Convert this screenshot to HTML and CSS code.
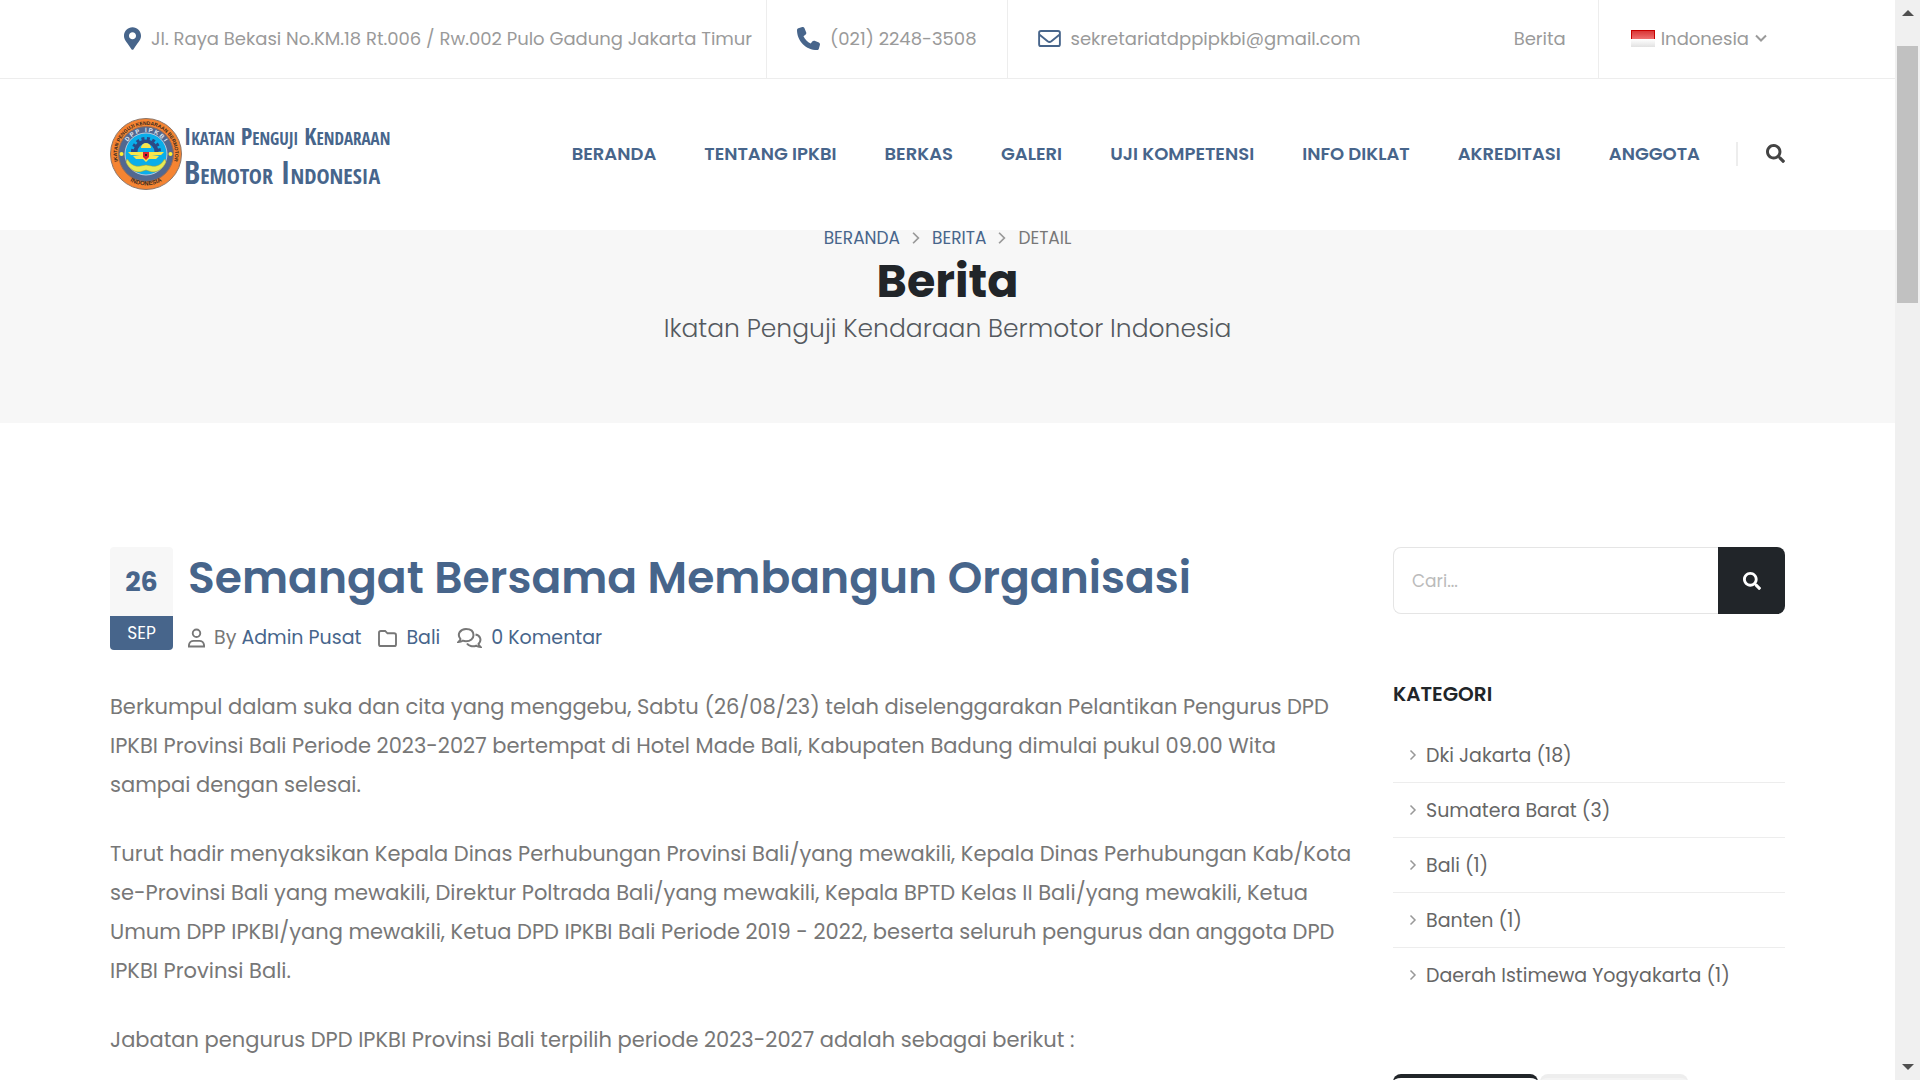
FILE: index.html
```html
<!DOCTYPE html>
<html lang="id">
<head>
<meta charset="utf-8">
<meta name="viewport" content="width=device-width, initial-scale=1">
<title>Berita</title>
<link rel="stylesheet" href="styles.css">
</head>
<body>
<svg class="sprite" aria-hidden="true">
  <symbol id="i-search" viewBox="0 0 512 512"><path d="M505 442.700 405.300 343c-4.500-4.500-10.600-7-17-7H372c27.600-35.300 44-79.700 44-128C416 93.100 322.900 0 208 0S0 93.100 0 208s93.100 208 208 208c48.300 0 92.700-16.400 128-44v16.300c0 6.400 2.500 12.500 7 17l99.700 99.700c9.400 9.400 24.600 9.400 33.900 0l28.300-28.300c9.400-9.400 9.400-24.600.1-34zM208 336c-70.700 0-128-57.200-128-128 0-70.700 57.200-128 128-128 70.700 0 128 57.200 128 128 0 70.700-57.200 128-128 128z"/></symbol>
  <symbol id="i-right" viewBox="0 0 8 12"><path d="M1.500 1.500 6 6l-4.500 4.500" fill="none" stroke="currentColor" stroke-width="1.500"/></symbol>
</svg>

<div class="page">
  <header>
    <div class="topbar">
      <div class="info info-first">
        <svg class="pin" viewBox="0 0 384 512" aria-hidden="true"><path d="M172.300 501.700C27 291 0 269.400 0 192 0 86 86 0 192 0s192 86 192 192c0 77.400-27 99-172.300 309.700-9.500 13.800-29.900 13.800-39.400 0zM192 272c44.200 0 80-35.800 80-80s-35.800-80-80-80-80 35.800-80 80 35.800 80 80 80z"/></svg>
        <span>Jl. Raya Bekasi No.KM.18 Rt.006 / Rw.002 Pulo Gadung Jakarta Timur</span>
      </div>
      <div class="info">
        <svg class="phone" viewBox="0 0 512 512" aria-hidden="true"><path d="M164.900 24.600c-7.700-18.600-28-28.500-47.400-23.200l-88 24C12.100 30.200 0 46 0 64c0 247.400 200.600 448 448 448 18 0 33.800-12.100 38.600-29.500l24-88c5.300-19.400-4.600-39.700-23.200-47.400l-96-40c-16.300-6.800-35.200-2.100-46.300 11.600L304.700 368C234.300 334.700 177.300 277.700 144 207.300L193.300 167c13.700-11.200 18.400-30 11.600-46.300l-40-96z"/></svg>
        <a href="#telepon">(021) 2248-3508</a>
      </div>
      <div class="info">
        <svg class="mail" viewBox="0 0 24 18" aria-hidden="true"><rect x="1" y="1" width="22" height="16" rx="2"/><path d="m1.500 5 8.500 7q2 1.500 4 0l8.500-7"/></svg>
        <a href="#surel">sekretariatdppipkbi@gmail.com</a>
      </div>
      <a class="info info-news" href="#berita">Berita</a>
      <button class="info language" type="button">
        <svg class="flag" viewBox="0 0 24 17" aria-hidden="true">
          <defs><linearGradient id="flag-red" x2="0" y2="1"><stop stop-color="#d93535"/><stop offset="1" stop-color="#ef7070"/></linearGradient><linearGradient id="flag-white" x2="0" y2="1"><stop stop-color="#fff"/><stop offset="1" stop-color="#e2e2e2"/></linearGradient></defs>
          <path fill="#c80000" d="M0 0h24v9H0z"/><path fill="url(#flag-red)" d="M1 1h22v8H1z"/><path fill="url(#flag-white)" d="M0 9h24v8H0z"/>
        </svg>
        <span>Indonesia</span>
        <svg class="down" viewBox="0 0 12 8" aria-hidden="true"><path d="m1 1.500 5 5 5-5"/></svg>
      </button>
    </div>

    <div class="navbar">
      <a class="brand" href="#beranda">
        <svg class="emblem" viewBox="0 0 72 72" aria-hidden="true">
          <defs><path id="arc-outer" d="M8.500 45A29 29 0 1 1 63.500 45"/><path id="arc-inner" d="M14 36A22 22 0 0 1 58 36"/><path id="arc-bottom" d="M15 59.500A32 32 0 0 0 57 59.500"/></defs>
          <circle cx="36" cy="36" r="35.500" fill="#f58432" stroke="#8b7568"/>
          <circle cx="36" cy="36" r="27.500" fill="#526890" stroke="#a26d4e"/>
          <circle cx="36" cy="36" r="21" fill="#0aaeea" stroke="#b9c9dc"/>
          <g fill="none" stroke="#2b4a86"><path stroke-width="4" d="M25.500 34a10.500 10.500 0 0 1 21 0"/><path stroke-width="3" stroke-dasharray="3 2.500" d="M22.500 34a13.500 13.500 0 0 1 27 0"/></g>
          <path fill="#f9e54b" d="M31 30a5 5 0 0 1 10 0zM18 34h15l3 2 3-2h15l-3 3H42l7 1-3 3h-7l-3 3-3-3h-7l-3-3 7-1H21z"/>
          <path fill="#e7eb55" stroke="#ae9b27" stroke-width=".5" d="M17.500 41c3 6 8 8 13 7l5.500-1 5.500 1c5 1 10-1 13-7l1.500 3c-3 7-10 12-17 9l-3-1-3 1c-7 3-14-2-17-9z"/>
          <path fill="#d7232f" d="M33 34h6v5l-3 3-3-3z"/><path fill="#222" d="M35 36h2v2h-2z"/>
          <circle cx="11.500" cy="36" r="2" fill="#fff133"/><circle cx="60.500" cy="36" r="2" fill="#fff133"/>
          <text class="ring ring-outer" text-anchor="middle"><textPath href="#arc-outer" startOffset="50%">IKATAN PENGUJI KENDARAAN BERMOTOR</textPath></text>
          <text class="ring ring-inner" text-anchor="middle"><textPath href="#arc-inner" startOffset="50%">D P P &#160; I P K B I</textPath></text>
          <text class="ring ring-bottom" text-anchor="middle"><textPath href="#arc-bottom" startOffset="50%">INDONESIA</textPath></text>
        </svg>
        <span class="brand-name"><span class="brand-top">Ikatan Penguji Kendaraan</span><span class="brand-bottom">Bemotor Indonesia</span></span>
      </a>
      <nav class="menu">
        <a href="#beranda">BERANDA</a>
        <a href="#tentang">TENTANG IPKBI</a>
        <a href="#berkas">BERKAS</a>
        <a href="#galeri">GALERI</a>
        <a href="#uji">UJI KOMPETENSI</a>
        <a href="#diklat">INFO DIKLAT</a>
        <a href="#akreditasi">AKREDITASI</a>
        <a href="#anggota">ANGGOTA</a>
      </nav>
      <button class="nav-search" type="button" aria-label="Cari"><svg viewBox="0 0 512 512"><use href="#i-search"/></svg></button>
    </div>
  </header>

  <section class="page-header">
    <nav class="crumbs">
      <a href="#beranda">BERANDA</a>
      <svg><use href="#i-right"/></svg>
      <a href="#berita">BERITA</a>
      <svg><use href="#i-right"/></svg>
      <span>DETAIL</span>
    </nav>
    <h1>Berita</h1>
    <p>Ikatan Penguji Kendaraan Bermotor Indonesia</p>
  </section>

  <div class="content">
    <article>
      <div class="post-head">
        <div class="date"><span class="day">26</span><span class="month">SEP</span></div>
        <div>
          <h2><a href="#artikel">Semangat Bersama Membangun Organisasi</a></h2>
          <div class="meta">
            <span><svg class="user" viewBox="0 0 18 20" aria-hidden="true"><circle cx="9" cy="5" r="4"/><path d="M1 19v-1.500A5 5 0 0 1 6 13h6a5 5 0 0 1 5 4.500V19z"/></svg><span>By <a href="#admin">Admin Pusat</a></span></span>
            <span><svg class="folder" viewBox="0 0 20 18" aria-hidden="true"><path d="M1 15V3a2 2 0 0 1 2-2h4.500L10 3.500h7a2 2 0 0 1 2 2V15a2 2 0 0 1-2 2H3a2 2 0 0 1-2-2z"/></svg><a href="#bali">Bali</a></span>
            <span><svg class="chat" viewBox="0 0 24 20" aria-hidden="true"><path d="M1 14q2-2 2-3C-1 6 3 1 8.500 1S16 4 16 7.200s-3 6-7.500 6q-2 0-3.200-.5Q3.500 14 1 14z"/><path d="M18 6.500c5 1 6.500 6 3 9.500q0 1 2 3-2.500 0-4.300-1.300C15 19 11 18 9.500 15.500"/></svg><a href="#komentar">0 Komentar</a></span>
          </div>
        </div>
      </div>
      <p>Berkumpul dalam suka dan cita yang menggebu, Sabtu (26/08/23) telah diselenggarakan Pelantikan Pengurus DPD IPKBI Provinsi Bali Periode 2023-2027 bertempat di Hotel Made Bali, Kabupaten Badung dimulai pukul 09.00 Wita sampai dengan selesai.</p>
      <p>Turut hadir menyaksikan Kepala Dinas Perhubungan Provinsi Bali/yang mewakili, Kepala Dinas Perhubungan Kab/Kota se-Provinsi Bali yang mewakili, Direktur Poltrada Bali/yang mewakili, Kepala BPTD Kelas II Bali/yang mewakili, Ketua Umum DPP IPKBI/yang mewakili, Ketua DPD IPKBI Bali Periode 2019 - 2022, beserta seluruh pengurus dan anggota DPD IPKBI Provinsi Bali.</p>
      <p>Jabatan pengurus DPD IPKBI Provinsi Bali terpilih periode 2023-2027 adalah sebagai berikut :</p>
    </article>

    <aside>
      <form class="search">
        <input type="text" placeholder="Cari..." aria-label="Cari">
        <button type="submit" aria-label="Cari"><svg viewBox="0 0 512 512"><use href="#i-search"/></svg></button>
      </form>
      <h3>KATEGORI</h3>
      <ul class="categories">
        <li><a href="#dki"><svg><use href="#i-right"/></svg>Dki Jakarta (18)</a></li>
        <li><a href="#sumbar"><svg><use href="#i-right"/></svg>Sumatera Barat (3)</a></li>
        <li><a href="#kat-bali"><svg><use href="#i-right"/></svg>Bali (1)</a></li>
        <li><a href="#banten"><svg><use href="#i-right"/></svg>Banten (1)</a></li>
        <li><a href="#diy"><svg><use href="#i-right"/></svg>Daerah Istimewa Yogyakarta (1)</a></li>
      </ul>
      <div class="tabs"><div class="tab tab-active"></div><div class="tab"></div></div>
    </aside>
  </div>
</div>

<div class="scrollbar" aria-hidden="true">
  <svg viewBox="0 0 12 6"><path d="M6 0l6 6H0z"/></svg>
  <div class="track"><div class="thumb"></div></div>
  <svg viewBox="0 0 12 6"><path d="M0 0h12L6 6z"/></svg>
</div>
</body>
</html>
```
FILE: styles.css
```css
:root {
  --blue: #47658b;
  --dark: #212529;
  --text: #777;
  --muted: #9a9a9a;
  --line: #ededed;
  --gutter: 110px;
}

* { box-sizing: border-box; }

body {
  margin: 0;
  display: flex;
  height: 100vh;
  overflow: hidden;
  background: #fff;
  color: var(--text);
  font-family: Poppins, Inter, "Open Sans", sans-serif;
}

h1, h2, h3, p, ul { margin: 0; padding: 0; }
a { color: inherit; text-decoration: none; }
button { border: 0; background: none; padding: 0; font: inherit; color: inherit; cursor: pointer; }
svg { display: block; flex: none; fill: currentColor; }
.sprite { position: absolute; width: 0; height: 0; }

.page { flex: 1; min-width: 0; overflow: hidden; }

/* Contact bar */
.topbar {
  display: flex;
  height: 79px;
  padding: 0 var(--gutter);
  border-bottom: 1px solid var(--line);
  color: var(--muted);
  font-size: 18px;
  white-space: nowrap;
}
.info {
  display: flex;
  align-items: center;
  gap: 10px;
  padding: 0 30px 2px;
}
.info + .info { border-left: 1px solid var(--line); }
.info.info-first { padding: 0 14px 2px; }
.info.info-news { margin-left: auto; padding-right: 32px; border-left: 0; }
.info.language { gap: 6px; padding-left: 32px; padding-right: 18px; }
.pin { width: 17px; height: 23px; color: var(--blue); }
.phone { width: 23px; height: 23px; color: var(--blue); }
.mail { width: 23px; height: 17px; fill: none; stroke: var(--blue); stroke-width: 2; }
.flag { width: 24px; height: 17px; }
.down { width: 12px; height: 8px; fill: none; stroke: currentColor; stroke-width: 2; }

/* Main navigation */
.navbar {
  display: flex;
  align-items: center;
  height: 151px;
  padding: 0 var(--gutter) 2px;
}
.brand { display: flex; align-items: center; gap: 2px; color: var(--blue); }
.emblem { width: 72px; height: 72px; }
.ring { font-family: "Liberation Sans", sans-serif; font-weight: 700; }
.ring-outer { font-size: 5px; fill: #38291f; }
.ring-inner { font-size: 6px; fill: #e3e8f0; }
.ring-bottom { font-size: 6px; fill: #38291f; }
.brand-name {
  display: flex;
  flex-direction: column;
  font-family: "Open Sans Condensed", "Open Sans", sans-serif;
  font-variant: small-caps;
  font-weight: 600;
  line-height: 36px;
  white-space: nowrap;
}
.brand-top { font-size: 24px; }
.brand-bottom { font-size: 32px; }
.menu {
  display: flex;
  gap: 48px;
  margin-left: auto;
  color: var(--blue);
  font-size: 18px;
  font-weight: 600;
  white-space: nowrap;
}
.nav-search {
  margin-left: 36px;
  padding-left: 28px;
  border-left: 2px solid var(--line);
  height: 24px;
  color: #444;
}
.nav-search svg { width: 19px; height: 19px; }

/* Page title */
.page-header {
  display: flex;
  flex-direction: column;
  align-items: center;
  padding-bottom: 76px;
  background: #f7f7f7;
  text-align: center;
}
.crumbs { display: flex; align-items: center; gap: 11px; font-size: 17px; line-height: 16px; }
.crumbs a { color: var(--blue); }
.crumbs svg { width: 10px; height: 14px; color: #999; }
.page-header h1 { margin-top: 10px; color: var(--dark); font-size: 46px; font-weight: 700; line-height: 50px; }
.page-header p { margin-top: 5px; color: #555a5f; font-size: 25px; font-weight: 300; line-height: 36px; }

/* Article */
.content {
  display: grid;
  grid-template-columns: minmax(0, 1fr) 392px;
  gap: 40px;
  padding: 124px var(--gutter) 0;
}
.post-head { display: flex; gap: 15px; margin-bottom: 35px; }
.date { width: 63px; text-align: center; border-radius: 4px; overflow: hidden; align-self: flex-start; }
.day, .month { display: block; }
.day { background: #f7f7f7; color: var(--blue); font-size: 27px; font-weight: 700; line-height: 69px; }
.month { background: var(--blue); color: #fff; font-size: 17px; line-height: 34px; }
.post-head h2 { padding-top: 6px; color: var(--blue); font-size: 44px; font-weight: 600; line-height: 50px; white-space: nowrap; }
.meta { display: flex; gap: 17px; margin-top: 21px; font-size: 19px; line-height: 28px; }
.meta > span { display: flex; align-items: center; gap: 9px; }
.meta a { color: var(--blue); }
.meta svg { fill: none; stroke: currentColor; stroke-width: 2; }
.user { width: 17px; height: 20px; }
.folder { width: 19px; height: 17px; }
.chat { width: 25px; height: 20px; }
article p { margin-bottom: 30px; font-size: 21px; line-height: 39px; }

/* Sidebar */
.search { display: flex; height: 67px; margin-bottom: 66px; }
.search input {
  flex: 1;
  min-width: 0;
  padding: 0 18px;
  border: 1px solid #e5e5e5;
  border-right: 0;
  border-radius: 8px 0 0 8px;
  font: inherit;
  font-size: 17px;
}
.search input::placeholder { color: #bbb; }
.search button {
  display: grid;
  place-items: center;
  width: 67px;
  border-radius: 0 8px 8px 0;
  background: var(--dark);
  color: #fff;
}
.search button svg { width: 18px; height: 18px; }
aside h3 { margin-bottom: 20px; color: var(--dark); font-size: 20px; font-weight: 600; line-height: 28px; }
.categories { list-style: none; margin-bottom: 72px; }
.categories li + li { border-top: 1px solid var(--line); }
.categories a { display: flex; align-items: center; gap: 9px; height: 54px; padding-left: 16px; color: #666; font-size: 19px; }
.categories svg { width: 8px; height: 12px; color: #999; }
.tabs { display: flex; gap: 2px; }
.tab { width: 148px; height: 60px; border-top: 4px solid #eee; border-radius: 8px 8px 0 0; background: #f4f4f4; }
.tab-active { width: 145px; border-top-color: var(--dark); background: #fff; }

/* Window scroll bar */
.scrollbar {
  display: flex;
  flex-direction: column;
  align-items: center;
  width: 25px;
  padding: 10px 0;
  background: #f0f0f0;
  color: #505050;
}
.scrollbar svg { width: 12px; height: 6px; }
.track { flex: 1; width: 21px; padding: 30px 0; }
.thumb { height: 26%; background: #c1c1c1; }
```
